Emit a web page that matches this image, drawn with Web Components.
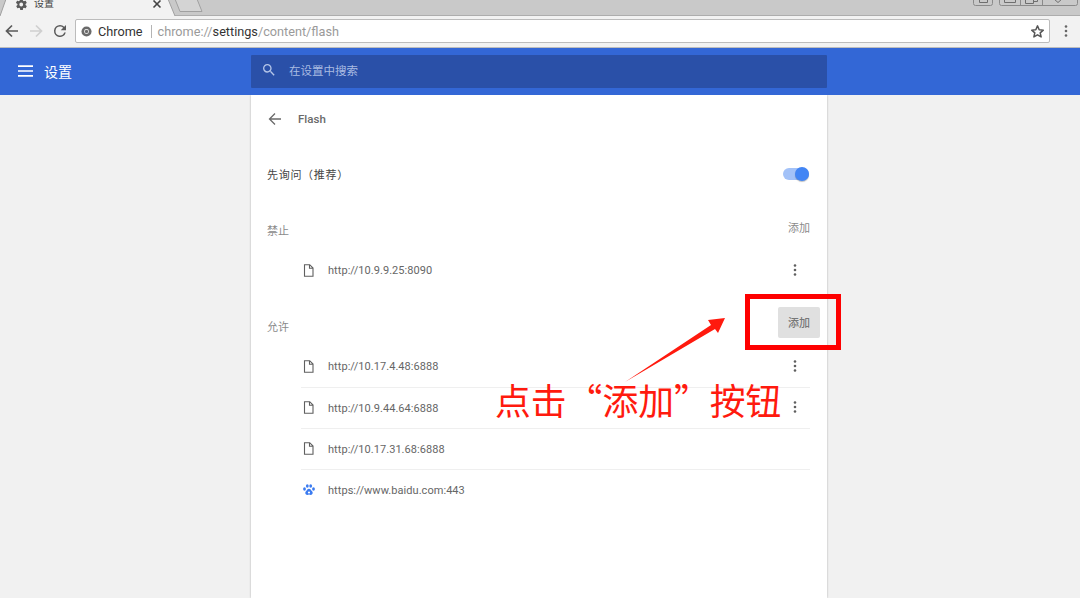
<!DOCTYPE html>
<html lang="zh"><head><meta charset="utf-8"><title>设置</title>
<style>
html,body{margin:0;padding:0;height:598px;overflow:hidden;background:#f1f1f1;font-family:Roboto,"Noto Sans CJK SC",sans-serif}
body{display:flex;flex-direction:column;position:relative}
</style></head><body>
<browser-frame></browser-frame>
<settings-header></settings-header>
<settings-main>
  <flash-card></flash-card>
</settings-main>
<click-callout></click-callout>
<script>
const FONT='Roboto,"Noto Sans CJK SC",sans-serif';
function def(name,html){
  customElements.define(name,class extends HTMLElement{
    constructor(){super();this.attachShadow({mode:'open'}).innerHTML=html;}
  });
}
def('browser-frame',`<style>
:host{display:block;flex:none;height:48px;background:#f2f2f2;font-family:${FONT}}
.strip{height:16px;background:linear-gradient(#c9c9c9 15px,#adadad 15px);position:relative;overflow:hidden}
.tab{position:absolute;left:0;top:0}
.t{position:absolute;left:34px;top:-4px;font-size:10px;line-height:16px;color:#444}
.gear{position:absolute;left:15px;top:-2px}
.x{position:absolute;left:152px;top:-1px}
.win{position:absolute;left:973px;top:0}
.bar{height:32px;display:flex;align-items:center;box-sizing:border-box;padding:0 0 1px 0;border-bottom:1px solid #bdbdbd}
.btn{flex:none;display:flex;align-items:center;justify-content:center;width:16px;height:16px}
.nav{display:flex;gap:8px;padding:0 0 0 4px;width:75px;box-sizing:border-box}
.omni{flex:none;width:975px;height:24px;box-sizing:border-box;background:#fff;border:1px solid #bcbcbc;border-radius:2px;display:flex;align-items:center;padding:0 4px 0 5px;font-size:12.7px;color:#9a9a9a;white-space:nowrap}
.omni b{font-weight:400;color:#333}
.sep{width:1px;height:13px;background:#b4b4b4;margin:0 6px 0 8px}
.logo{margin-right:6px}
.star{margin-left:auto}
.menu{margin-left:14px}
</style>
<div class="strip">
 <svg class="tab" width="210" height="16" viewBox="0 0 210 16"><path d="M175 -1 L180 11.500 H202 L197 -1Z" fill="#d4d4d4" stroke="#a0a0a0"/><path d="M0 16 L6 -1 H168 L175 16Z" fill="#f2f2f2"/><path d="M0 16 L6 -1M168 -1 L175 16" fill="none" stroke="#a0a0a0"/></svg>
 <svg class="gear" width="13" height="13" viewBox="0 0 24 24"><path fill="#5a5a5a" d="M19.4 13c.04-.32.1-.66.1-1s-.06-.68-.1-1l2.100-1.650a.5.5 0 0 0 .12-.64l-2-3.460a.5.5 0 0 0-.61-.22l-2.490 1a7.300 7.300 0 0 0-1.690-.98L14 2.420A.5.5 0 0 0 13.500 2h-4a.5.5 0 0 0-.5.42l-.38 2.650c-.61.25-1.170.59-1.690.98l-2.490-1a.5.5 0 0 0-.61.22l-2 3.460a.5.5 0 0 0 .12.64L4.600 11c-.04.32-.1.66-.1 1s.06.68.1 1l-2.100 1.650a.5.5 0 0 0-.12.64l2 3.460c.12.22.39.3.61.22l2.490-1c.52.4 1.080.73 1.690.98l.38 2.630c.04.24.25.42.5.42h4c.25 0 .46-.18.5-.42l.38-2.650c.61-.25 1.170-.59 1.690-.98l2.490 1c.22.08.49 0 .61-.22l2-3.460a.5.5 0 0 0-.12-.64L19.400 13zM11.500 15.500a3.500 3.500 0 1 1 0-7 3.500 3.500 0 0 1 0 7z"/></svg>
 <span class="t">设置</span>
 <svg class="x" width="10" height="10" viewBox="0 0 10 10"><path d="M1.500 1.500l7 7M8.500 1.500l-7 7" stroke="#444" stroke-width="1.600"/></svg>
 <svg class="win" width="107" height="8" viewBox="0 0 107 8"><g fill="none" stroke="#8a8a8a"><path d="M.5 -2V3.500a2 2 0 0 0 2 2H17.500a2 2 0 0 0 2-2V-2"/><path d="M26.500 -2V3.500a2 2 0 0 0 2 2H102.500a2 2 0 0 0 2-2V-2"/><path d="M47.500 -1V5.500M69.500 -1V5.500"/><g stroke="#6e6e6e"><path d="M6.500 -1V2.500H14.500V-1"/><path d="M31.500 -1V2.500H42.500V-1"/><path d="M52.500 -1V3.500H60.500V-1M60.500 1.500H64.500V-1"/><path d="M81 -1L85 2.500L89 -1"/></g></g></svg>
</div>
<div class="bar">
 <div class="nav">
  <span class="btn"><svg width="14" height="14" viewBox="0 0 14 14"><path d="M13 7H2M7 1.500L1.500 7 7 12.500" fill="none" stroke="#5a5a5a" stroke-width="1.700"/></svg></span>
  <span class="btn"><svg width="14" height="14" viewBox="0 0 14 14"><path d="M1 7h11M7 1.500L12.500 7 7 12.500" fill="none" stroke="#cfcfcf" stroke-width="1.700"/></svg></span>
  <span class="btn"><svg width="18" height="18" viewBox="0 0 24 24" style="flex:none"><path d="M17.650 6.350A7.960 7.960 0 0 0 12 4a8 8 0 1 0 7.730 10h-2.080A6 6 0 1 1 12 6c1.660 0 3.140.69 4.220 1.780L13 11h7V4l-2.350 2.350z" fill="#5a5a5a"/></svg></span>
 </div>
 <div class="omni">
  <svg class="logo" width="11" height="11" viewBox="0 0 12 12"><circle cx="6" cy="6" r="5.500" fill="#6a6a6a"/><circle cx="6" cy="6" r="2.600" fill="#fff"/><circle cx="6" cy="6" r="1.800" fill="#6a6a6a"/></svg>
  <b>Chrome</b><span class="sep"></span>chrome://<b>settings</b>/content/flash
  <svg class="star" width="15" height="15" viewBox="0 0 24 24"><path d="M12 3l2.700 6.100 6.600.7-5 4.400 1.500 6.500L12 17.300l-5.800 3.400 1.500-6.500-5-4.400 6.600-.7z" fill="none" stroke="#555" stroke-width="2.400" stroke-linejoin="round"/></svg>
 </div>
 <svg class="menu" width="4" height="14" viewBox="0 0 4 14"><g fill="#666"><circle cx="2" cy="2.500" r="1.300"/><circle cx="2" cy="7" r="1.300"/><circle cx="2" cy="11.500" r="1.300"/></g></svg>
</div>`);

def('settings-header',`<style>
:host{display:flex;flex:none;height:47px;background:#3367d6;color:#fff;font-family:${FONT};align-items:flex-start;box-sizing:border-box}
.l{flex:none;width:251px;height:47px;box-sizing:border-box;padding-left:18px;display:flex;align-items:center;gap:11px;font-size:14px;padding-bottom:1px}
.s{flex:none;width:576px;height:33px;margin-top:7px;background:#2a50a8;border-radius:1px;display:flex;align-items:center;box-sizing:border-box;padding:0 0 3px 10px;gap:12px;font-size:11.5px;color:#a9bbe2}
</style>
<div class="l"><svg width="15" height="12" viewBox="0 0 15 12"><path d="M0 1.200h15M0 6h15M0 10.800h15" stroke="#fff" stroke-width="1.700"/></svg><span>设置</span></div>
<div class="s"><svg width="16" height="16" viewBox="0 0 24 24"><path d="M15.500 14h-.79l-.28-.27A6.470 6.470 0 0 0 16 9.500 6.500 6.500 0 1 0 9.500 16c1.610 0 3.090-.59 4.230-1.570l.27.28v.79l5 4.990L20.490 19l-4.990-5zm-6 0C7.010 14 5 11.990 5 9.500S7.010 5 9.500 5 14 7.010 14 9.500 11.990 14 9.500 14z" fill="#b4c5e8"/></svg><span>在设置中搜索</span></div>`);

def('settings-main',`<style>
:host{display:flex;flex:1;min-height:0;justify-content:flex-start;padding-left:251px;background:#f1f1f1;overflow:hidden}
</style><slot></slot>`);

def('file-icon',`<style>:host{display:flex;flex:none;width:12px;height:14px;color:#5f5f5f}</style>
<svg width="11" height="13" viewBox="0 0 11 13"><path d="M1.500.700h5.200L10 4v8.300H1.500zM6.500.700V4.200H10" fill="none" stroke="currentColor" stroke-width="1.100"/></svg>`);
def('paw-icon',`<style>:host{display:flex;flex:none;width:12px;height:14px;align-items:center}</style>
<svg width="12" height="12" viewBox="0 0 12 12"><g fill="#3b7bf0"><ellipse cx="1.500" cy="5" rx="1.400" ry="1.700"/><ellipse cx="4.300" cy="2" rx="1.400" ry="1.800"/><ellipse cx="7.700" cy="2" rx="1.400" ry="1.800"/><ellipse cx="10.500" cy="5" rx="1.400" ry="1.700"/><path d="M6 4.800c1.500 0 2 1.500 3 2.400 1.300 1.200.7 3.800-1.400 3.700-.8 0-1-.3-1.600-.3s-.9.300-1.600.3c-2.100.1-2.700-2.500-1.400-3.700 1-.9 1.500-2.400 3-2.400z"/></g><circle cx="6" cy="8.500" r="1.100" fill="#fff"/></svg>`);
def('kebab-icon',`<style>:host{display:flex;flex:none;width:4px;height:12px;position:relative;top:-1px}</style>
<svg width="4" height="12" viewBox="0 0 4 12"><g fill="#5f5f5f"><circle cx="2" cy="1.500" r="1.300"/><circle cx="2" cy="6" r="1.300"/><circle cx="2" cy="10.500" r="1.300"/></g></svg>`);

customElements.define('site-row',class extends HTMLElement{
  constructor(){super();
    const icon=this.getAttribute('icon')==='paw'?'<paw-icon></paw-icon>':'<file-icon></file-icon>';
    const more=this.hasAttribute('more')?'<kebab-icon></kebab-icon>':'';
    this.attachShadow({mode:'open'}).innerHTML=`<style>
:host{display:flex;align-items:center;box-sizing:border-box;height:41px;margin-left:34px;padding:0 13px 0 2px;font-size:11px;color:#666;border-top:1px solid #efefef;letter-spacing:.05px}
:host([first]){border-top:0}
.u{flex:1;margin-left:13px;white-space:nowrap}
</style>${icon}<span class="u"><slot></slot></span>${more}`;
  }
});

def('flash-card',`<style>
:host{display:block;flex:none;width:576px;height:503px;background:#fff;box-shadow:0 0 2px rgba(0,0,0,.28);box-sizing:border-box;padding:0 17px 0 16px;font-family:${FONT};overflow:hidden}
.head{height:47px;display:flex;align-items:center;gap:16px;font-size:11.5px;font-weight:500;color:#6a6a6a;padding-left:1px}
.ask{height:57px;margin-top:3px;display:flex;align-items:center;justify-content:space-between;font-size:11px;color:#444;letter-spacing:.7px}
.tog{position:relative;width:26px;height:12px;background:#a3c2f8;border-radius:6px;margin:1px 1px 0 0}
.tog i{position:absolute;right:0;top:-1px;width:14px;height:14px;border-radius:50%;background:#4285f4;box-shadow:0 1px 1px rgba(0,0,0,.25)}
.sec{display:flex;justify-content:space-between;align-items:center;font-size:11px;color:#8a8a8a}
.sec1{height:40px;margin-top:8px}
.sec1 .a{margin-top:-6px}
.sec2{height:41px;margin-top:14px}
.a{color:#8a8a8a;font-size:11px}
.btn{width:42px;height:31px;background:#e0e0e0;border-radius:2px;display:flex;align-items:center;justify-content:center;margin-right:-10px;color:#777;font-weight:500;margin-top:-7px}
.list{display:block}
</style>
<div class="head"><svg width="14" height="14" viewBox="0 0 14 14"><path d="M13 7H2M7 1.500L1.500 7 7 12.500" fill="none" stroke="#6a6a6a" stroke-width="1.300"/></svg><span>Flash</span></div>
<div class="ask"><span>先询问（推荐）</span><div class="tog"><i></i></div></div>
<div class="sec sec1"><span>禁止</span><span class="a">添加</span></div>
<div class="list"><site-row first more>http://10.9.9.25:8090</site-row></div>
<div class="sec sec2"><span>允许</span><span class="btn">添加</span></div>
<div class="list">
<site-row first more>http://10.17.4.48:6888</site-row>
<site-row more>http://10.9.44.64:6888</site-row>
<site-row>http://10.17.31.68:6888</site-row>
<site-row icon="paw">https://www.baidu.com:443</site-row>
</div>`);

def('click-callout',`<style>
:host{position:absolute;left:0;top:0;width:1080px;height:598px;display:block;pointer-events:none;font-family:${FONT}}
.box{position:absolute;left:745px;top:294px;width:96px;height:56px;box-sizing:border-box;border:5px solid #fe0000}
.arrow{position:absolute;left:620px;top:312px}
.txt{position:absolute;left:495px;top:374px;font-size:35.8px;line-height:50px;color:#ff1a0e;white-space:nowrap;font-family:"Noto Sans CJK SC",sans-serif}
</style>
<div class="box"></div>
<svg class="arrow" width="110" height="72" viewBox="620 312 110 72"><path d="M625 382 L711 325 L708 320 L725 318 L718 333 L715 329 Z" fill="#ff1a0e"/></svg>
<div class="txt">点击“添加”按钮</div>`);
</script>
</body></html>
